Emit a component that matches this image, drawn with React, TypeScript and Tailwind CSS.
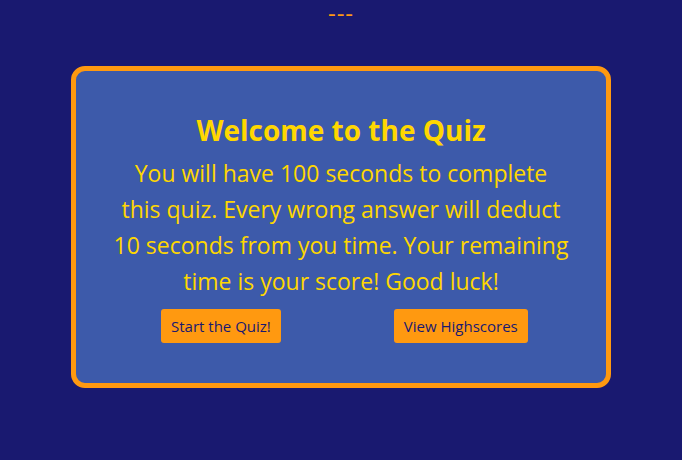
export default function App() {
  return (
    <div
      className="min-h-[460px] w-full bg-[#191970] flex flex-col items-center pt-[1px]"
      style={{ fontFamily: '"Open Sans", "Noto Sans", sans-serif' }}
    >
      <div className="px-[4px] text-[24px] leading-[24px] text-[#ff9910] tracking-[1px]">---</div>
      <div className="mt-[41px] w-[540px] rounded-[14px] border-[5px] border-[#ff9910] bg-[#3d5aaa] flex flex-col items-center pt-[41px] pb-[40px]">
        <h1 className="text-[28px] leading-[37px] font-bold text-[#ffd700]">Welcome to the Quiz</h1>
        <p className="mt-[6px] w-[500px] text-center text-[23px] leading-[36px] text-[#ffd700]">
          You will have 100 seconds to complete<br />
          this quiz. Every wrong answer will deduct<br />
          10 seconds from you time. Your remaining<br />
          time is your score! Good luck!
        </p>
        <div className="mt-[10px] w-full flex pl-[85px] gap-[113px]">
          <button className="h-[34px] px-[10px] rounded-[3px] bg-[#ff9910] text-[15px] text-[#191970]">Start the Quiz!</button>
          <button className="h-[34px] px-[10px] rounded-[3px] bg-[#ff9910] text-[15px] text-[#191970]">View Highscores</button>
        </div>
      </div>
    </div>
  );
}
